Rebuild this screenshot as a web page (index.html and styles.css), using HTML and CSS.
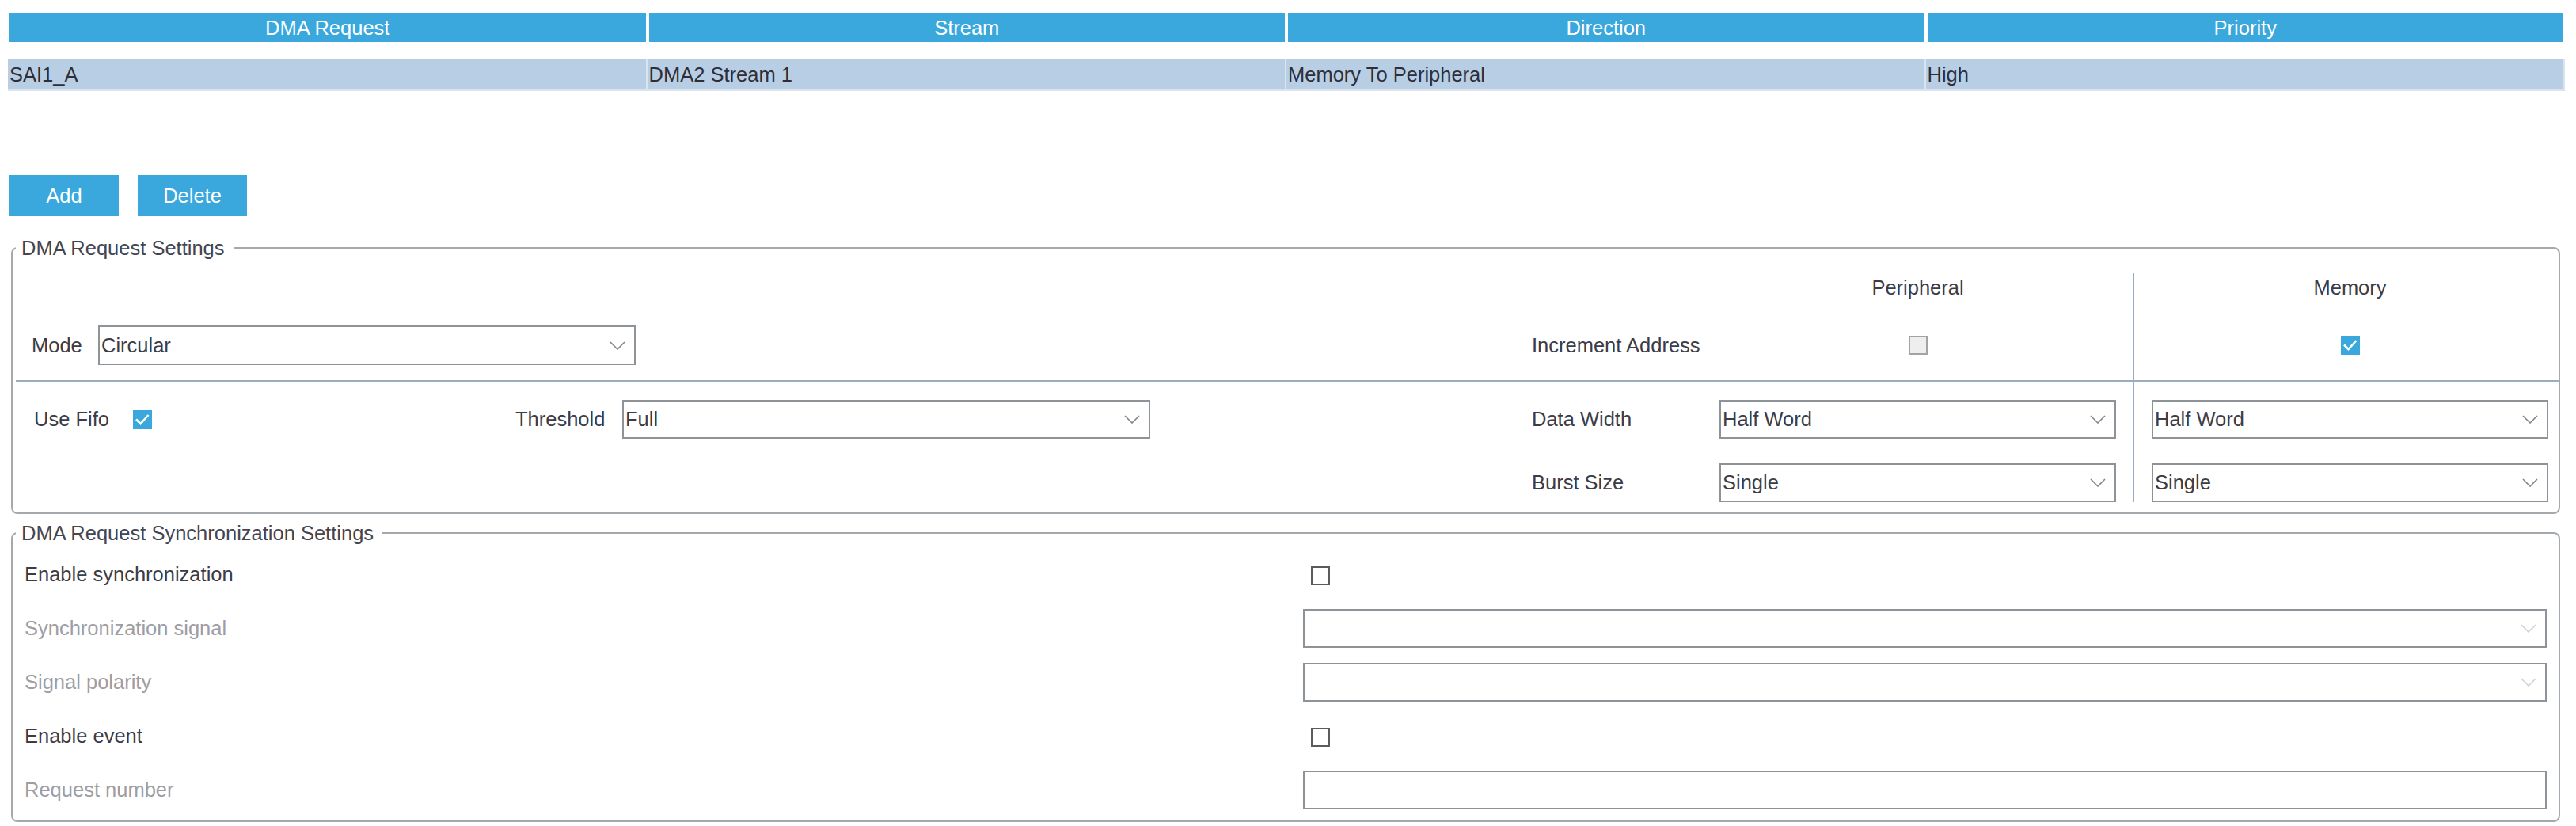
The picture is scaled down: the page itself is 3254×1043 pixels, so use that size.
FILE: index.html
```html
<!DOCTYPE html>
<html lang="en">
 <head>
  <title>DMA Settings</title>
  <meta charset="utf-8"/>
  <link rel="stylesheet" href="styles.css">
 </head>
 <body>
	<div id="wrap">
		<!-- request list -->
		<div class="grid-head">
			<div>DMA Request</div>
			<div>Stream</div>
			<div>Direction</div>
			<div>Priority</div>
		</div>
		<div class="grid-row">
			<div>SAI1_A</div>
			<div>DMA2 Stream 1</div>
			<div>Memory To Peripheral</div>
			<div>High</div>
		</div>

		<div class="btns">
			<button class="btn" type="button">Add</button>
			<button class="btn" type="button">Delete</button>
		</div>

		<!-- request settings -->
		<fieldset class="box">
			<legend>DMA Request Settings</legend>
			<div class="dma-body">
				<div class="main">
					<div class="top">
						<div class="row head">
							<span class="left"></span>
							<span class="plabel"></span>
							<span class="pcell">Peripheral</span>
						</div>
						<div class="row mid">
							<div class="left">
								<span class="lbl-mode">Mode</span>
								<div class="select w-mode">
									<span>Circular</span>
									<svg viewBox="0 0 20 11"><polyline points="1,1 10,10 19,1"/></svg>
								</div>
							</div>
							<span class="plabel">Increment Address</span>
							<span class="pcell"><span class="cb off"></span></span>
						</div>
					</div>
					<div class="bot">
						<div class="row">
							<div class="left">
								<span class="lbl-fifo">Use Fifo</span>
								<span class="cb on"><svg viewBox="0 0 24 24"><polyline points="4,11.5 9.5,17 19.5,6"/></svg></span>
								<span class="lbl-thr">Threshold</span>
								<div class="select w-thr">
									<span>Full</span>
									<svg viewBox="0 0 20 11"><polyline points="1,1 10,10 19,1"/></svg>
								</div>
							</div>
							<span class="plabel">Data Width</span>
							<div class="pcell">
								<div class="select">
									<span>Half Word</span>
									<svg viewBox="0 0 20 11"><polyline points="1,1 10,10 19,1"/></svg>
								</div>
							</div>
						</div>
						<div class="row gap">
							<div class="left"></div>
							<span class="plabel">Burst Size</span>
							<div class="pcell">
								<div class="select">
									<span>Single</span>
									<svg viewBox="0 0 20 11"><polyline points="1,1 10,10 19,1"/></svg>
								</div>
							</div>
						</div>
					</div>
				</div>
				<div class="mem">
					<div class="top">
						<div class="row head">Memory</div>
						<div class="row mid">
							<span class="cb on"><svg viewBox="0 0 24 24"><polyline points="4,11.5 9.5,17 19.5,6"/></svg></span>
						</div>
					</div>
					<div class="bot">
						<div class="row">
							<div class="select">
								<span>Half Word</span>
								<svg viewBox="0 0 20 11"><polyline points="1,1 10,10 19,1"/></svg>
							</div>
						</div>
						<div class="row gap">
							<div class="select">
								<span>Single</span>
								<svg viewBox="0 0 20 11"><polyline points="1,1 10,10 19,1"/></svg>
							</div>
						</div>
					</div>
				</div>
			</div>
		</fieldset>

		<!-- synchronization settings -->
		<fieldset class="box sync">
			<legend>DMA Request Synchronization Settings</legend>
			<div class="sync-grid">
				<span>Enable synchronization</span>
				<span><span class="cb blank"></span></span>

				<span class="dis">Synchronization signal</span>
				<div class="select off">
					<span></span>
					<svg viewBox="0 0 20 11"><polyline points="1,1 10,10 19,1"/></svg>
				</div>

				<span class="dis">Signal polarity</span>
				<div class="select off">
					<span></span>
					<svg viewBox="0 0 20 11"><polyline points="1,1 10,10 19,1"/></svg>
				</div>

				<span>Enable event</span>
				<span><span class="cb blank"></span></span>

				<span class="dis">Request number</span>
				<div class="input"></div>
			</div>
		</fieldset>
	</div>
 </body>
</html>
```

FILE: styles.css
```css
*{margin:0; padding:0; box-sizing:border-box;}
body{font-family:"Liberation Sans", Arial, sans-serif; font-size:25.5px; color:#3c3c46; background:#fff;}
#wrap{padding-top:17px;}

/* request list */
.grid-head{display:grid; grid-template-columns:repeat(4, 1fr); gap:4px; width:3226px; margin-left:12px;}
.grid-head div{height:36px; line-height:36px; background:#3aa8dc; color:#fff; text-align:center;}
.grid-row{display:grid; grid-template-columns:repeat(4, 1fr); width:3230px; margin:22px 0 0 10px;}
.grid-row div{height:40px; line-height:38px; padding-left:2px; background:#b8cee4; color:#2e2e3a;
border-right:2px solid #dbe4ee; border-bottom:2px solid #dbe4ee;}

.btns{display:flex; gap:24px; margin:106px 0 0 12px;}
.btn{width:138px; height:52px; line-height:52px; border:none; background:#3aa8dc; color:#fff; font:inherit;}

/* fieldsets */
.box{width:3220px; margin:25px 0 0 14px; border:2px solid #a4a9ae; border-radius:8px; padding:17px 0 13px 4px;}
.box legend{line-height:30px; padding:0 11px 0 7px; color:#454550;}
.box.sync{margin-top:9px; padding:13px 15px 14px 4px;}

.dma-body{display:flex;}
.main{flex:1;}
.mem{width:538px; flex-shrink:0; border-left:2px solid #9aabc2;}
.top{padding-bottom:19px; border-bottom:2px solid #9aabc2;}
.bot{padding-top:23px;}

.row{display:flex; align-items:center;}
.row.head{height:36px;}
.row.mid{height:50px; margin-top:30px;}
.bot .row{height:49px;}
.bot .row.gap{margin-top:31px;}
.main .row{padding-right:21px;}
.mem .row{padding:0 13px 0 22px; justify-content:center;}

.left{width:1915px; flex-shrink:0; display:flex; align-items:center;}
.plabel{width:237px; flex-shrink:0;}
.pcell{width:501px; flex-shrink:0; display:flex; align-items:center; justify-content:center;}

.lbl-mode{width:104px; padding-left:20px; flex-shrink:0;}
.lbl-fifo{width:148px; padding-left:23px; flex-shrink:0;}
.lbl-thr{width:135px; margin-left:459px; flex-shrink:0;}

/* controls */
.select{display:flex; align-items:center; justify-content:space-between; width:100%; height:49px;
border:2px solid #8e9398; padding:0 11px 0 2px; background:#fff; color:#3c3c46;}
.select svg{width:20px; height:11px; flex-shrink:0;}
.select polyline{fill:none; stroke:#80858b; stroke-width:1.6;}
.select.off polyline{stroke:#d0d2d4;}
.w-mode{width:679px; height:50px;}
.w-thr{width:667px;}

.cb{display:inline-block; width:24px; height:24px; flex-shrink:0; vertical-align:middle;}
.cb.off{border:2px solid #a3a3a3; background:#eeeeee;}
.cb.blank{border:2px solid #5b5b5b; background:#fff;}
.cb.on{background:#3aa8dc;}
.cb.on svg{display:block; width:24px; height:24px;}
.cb.on polyline{fill:none; stroke:#fff; stroke-width:2.6;}

.sync-grid{display:grid; grid-template-columns:1615px 1fr; grid-auto-rows:49px; row-gap:19px;
align-items:center; padding-left:11px;}
.sync-grid .cb{margin-left:10px;}
.dis{color:#9d9da3;}
.input{height:49px; border:2px solid #8e9398; background:#fff;}
```
